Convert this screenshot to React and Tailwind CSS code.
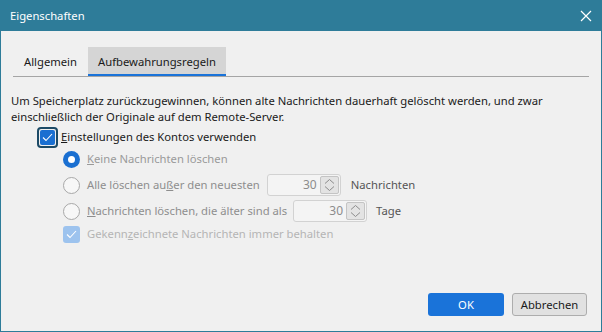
import React from "react";

const font = { fontFamily: '"Noto Sans", "Open Sans", sans-serif' };

function Spin({ value }) {
  return (
    <div className="flex items-center h-[22px] w-[74px] rounded-[3px] border border-[#d2d2d2] bg-[#f4f4f4] pr-[1px] shrink-0">
      <span className="flex-1 text-right pr-[3px] text-[#8c8c8c] text-[12px]">{value}</span>
      <div className="flex flex-col items-center justify-center h-[18px] w-[19px] rounded-[2px] border border-[#c4c4c4] bg-[#e3e3e3]">
        <svg width="11" height="14" viewBox="0 0 11 14" fill="none" stroke="#8c8c8c" strokeWidth="1">
          <path d="M1 5.5 L5.5 1.5 L10 5.5" />
          <path d="M1 8.5 L5.5 12.5 L10 8.5" />
        </svg>
      </div>
    </div>
  );
}

function Radio({ checked }) {
  if (checked)
    return (
      <div className="w-[17px] h-[17px] rounded-full bg-[#1a6fd1] flex items-center justify-center shrink-0">
        <div className="w-[7px] h-[7px] rounded-full bg-white" />
      </div>
    );
  return <div className="w-[17px] h-[17px] rounded-full border border-[#a8a8a8] bg-[#f7f7f7] shrink-0" />;
}

export default function App() {
  return (
    <div className="w-[602px] h-[332px] flex flex-col bg-[#2e7c99] text-[11.25px] leading-[16px] whitespace-nowrap" style={font}>
      <div className="h-[31px] flex items-center justify-between pl-[10px] pr-[10px] text-white">
        <span>Eigenschaften</span>
        <svg width="12" height="12" viewBox="0 0 12 12" stroke="white" strokeWidth="1.2">
          <path d="M1 1 L11 11 M11 1 L1 11" />
        </svg>
      </div>
      <div className="flex-1 mx-px mb-px bg-[#f0f0f0] flex flex-col text-[#1a1a1a]">
        <div className="mt-[16px] mx-[12px] flex border-b border-[#a5a5a5]">
          <div className="h-[29px] px-[11px] flex items-center">Allgemein</div>
          <div className="h-[29px] px-[10px] flex items-center bg-[#d5d5d5] border-b-2 border-[#1a73d9] pt-[2px]">
            Aufbewahrungsregeln
          </div>
        </div>
        <div className="mt-[16px] ml-[10px]">
          <div>Um Speicherplatz zurückzugewinnen, können alte Nachrichten dauerhaft gelöscht werden, und zwar</div>
          <div>einschließlich der Originale auf dem Remote-Server.</div>
        </div>
        <div className="mt-[1px] ml-[36px] flex items-center gap-[3px] h-[22px]">
          <div className="w-[21px] h-[21px] rounded-[4px] border-2 border-[#1c4a66] flex items-center justify-center">
            <div className="w-[15px] h-[15px] rounded-[2px] bg-[#1a6fd1] flex items-center justify-center">
              <svg width="11" height="9" viewBox="0 0 11 9" fill="none" stroke="white" strokeWidth="1.1">
                <path d="M1 4.5 L4 7.5 L10 1" />
              </svg>
            </div>
          </div>
          <span><span className="underline">E</span>instellungen des Kontos verwenden</span>
        </div>
        <div className="ml-[62px] flex flex-col">
          <div className="flex items-center gap-[7px] h-[22px]">
            <Radio checked />
            <span className="text-[#9a9a9a]"><span className="underline">K</span>eine Nachrichten löschen</span>
          </div>
          <div className="flex items-center h-[26px] mt-[2px]">
            <Radio />
            <span className="ml-[7px] text-[#8e8e8e]">Alle löschen au<span className="underline">ß</span>er den neuesten</span>
            <div className="ml-[7px]"><Spin value="30" /></div>
            <span className="ml-[10px] text-[#555]">Nachrichten</span>
          </div>
          <div className="flex items-center h-[26px]">
            <Radio />
            <span className="ml-[7px] text-[#8e8e8e]"><span className="underline">N</span>achrichten löschen, die älter sind als</span>
            <div className="ml-[6px]"><Spin value="30" /></div>
            <span className="ml-[9px] text-[#555]">Tage</span>
          </div>
          <div className="flex items-center gap-[7px] h-[20px]">
            <div className="w-[17px] h-[17px] rounded-[3px] bg-[#9dc3ee] flex items-center justify-center">
              <svg width="11" height="9" viewBox="0 0 11 9" fill="none" stroke="white" strokeWidth="1.1">
                <path d="M1 4.5 L4 7.5 L10 1" />
              </svg>
            </div>
            <span className="text-[#b5b5b5]">Gekenn<span className="underline">z</span>eichnete Nachrichten immer behalten</span>
          </div>
        </div>
        <div className="mt-auto mb-[15px] mr-[14px] flex justify-end gap-[8px]">
          <div className="w-[76px] h-[23px] rounded-[3px] bg-[#1a73d9] text-white flex items-center justify-center">OK</div>
          <div className="w-[75px] h-[23px] rounded-[3px] bg-[#e1e1e1] border border-[#adadad] flex items-center justify-center">Abbrechen</div>
        </div>
      </div>
    </div>
  );
}
